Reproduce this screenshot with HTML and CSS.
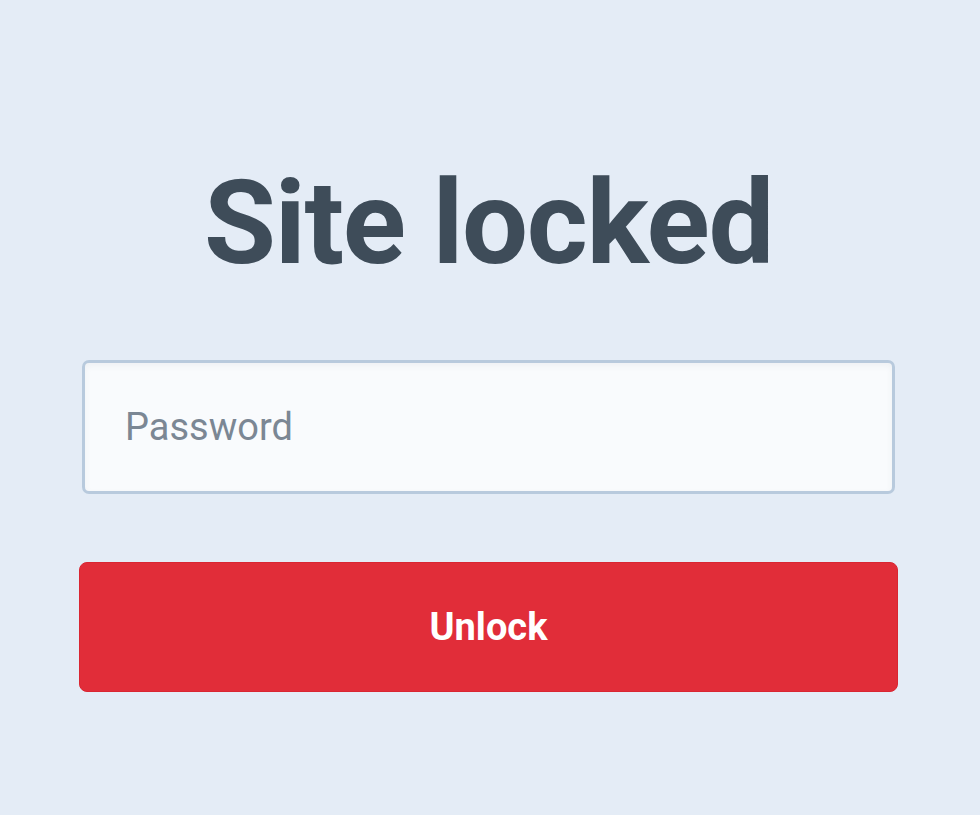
FILE: index.html
```html
<!DOCTYPE html>
<html lang="en">
<head>
<meta charset="utf-8">
<title>Site locked</title>
<link rel="stylesheet" href="styles.css">
</head>
<body>
<main class="lock">
  <h1 class="lock-title">Site locked</h1>
  <form class="lock-form">
    <input class="lock-input" type="password" placeholder="Password">
    <button class="lock-button" type="button">Unlock</button>
  </form>
</main>
</body>
</html>
```

FILE: styles.css
```css
html, body {
  margin: 0;
  padding: 0;
  background: #e4ecf6;
  height: 100%;
}
body {
  font-family: Roboto, "Noto Sans", sans-serif;
}
.lock {
  display: flex;
  flex-direction: column;
  padding: 0 82px 0 79px;
}
.lock-title {
  margin: 153px 0 0;
  text-align: center;
  font-size: 117px;
  line-height: 140px;
  letter-spacing: -1.3px;
  font-weight: 700;
  color: #3e4c59;
}
.lock-form {
  display: flex;
  flex-direction: column;
  margin-top: 67px;
}
.lock-input {
  box-sizing: border-box;
  margin: 0 3px;
  height: 134px;
  border: 3px solid #b8cadd;
  border-radius: 7px;
  background: #f9fbfd;
  box-shadow: inset 0 3px 6px rgba(60, 80, 110, 0.06);
  padding: 0 40px;
  font-family: Roboto, sans-serif;
  font-size: 38px;
  color: #3e4c59;
  outline: none;
}
.lock-input::placeholder {
  color: #7b8794;
}
.lock-button {
  margin-top: 68px;
  height: 130px;
  border: 1px solid #d92632;
  border-radius: 8px;
  background: #e12d39;
  color: #ffffff;
  font-family: Roboto, sans-serif;
  font-size: 38px;
  font-weight: 700;
  cursor: pointer;
}
```
